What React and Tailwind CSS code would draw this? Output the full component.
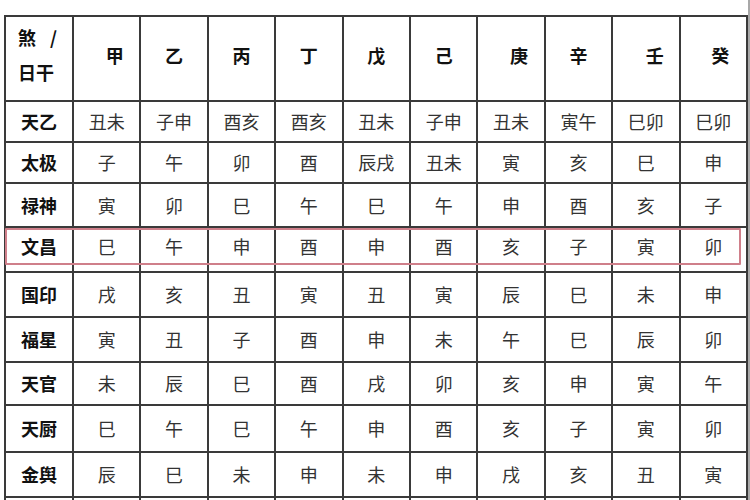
import React from "react";

const stems = ["甲", "乙", "丙", "丁", "戊", "己", "庚", "辛", "壬", "癸"];
const stemOffsets = ["pl-[16px]", "", "", "", "", "", "pl-[16px]", "", "pl-[18px]", "pl-[14px]"];

const rows = [
  { label: "天乙", h: "h-[41px]", pad: "", cells: ["丑未", "子申", "酉亥", "酉亥", "丑未", "子申", "丑未", "寅午", "巳卯", "巳卯"] },
  { label: "太极", h: "h-[41px]", pad: "", cells: ["子", "午", "卯", "酉", "辰戌", "丑未", "寅", "亥", "巳", "申"] },
  { label: "禄神", h: "h-[44px]", pad: "", cells: ["寅", "卯", "巳", "午", "巳", "午", "申", "酉", "亥", "子"] },
  { label: "文昌", h: "h-[45px]", pad: "pb-[7px]", cells: ["巳", "午", "申", "酉", "申", "酉", "亥", "子", "寅", "卯"] },
  { label: "国印", h: "h-[45px]", pad: "", cells: ["戌", "亥", "丑", "寅", "丑", "寅", "辰", "巳", "未", "申"] },
  { label: "福星", h: "h-[45px]", pad: "", cells: ["寅", "丑", "子", "酉", "申", "未", "午", "巳", "辰", "卯"] },
  { label: "天官", h: "h-[43px]", pad: "", cells: ["未", "辰", "巳", "酉", "戌", "卯", "亥", "申", "寅", "午"] },
  { label: "天厨", h: "h-[47px]", pad: "", cells: ["巳", "午", "巳", "午", "申", "酉", "亥", "子", "寅", "卯"] },
  { label: "金舆", h: "h-[45px]", pad: "", cells: ["辰", "巳", "未", "申", "未", "申", "戌", "亥", "丑", "寅"] },
  { label: "", h: "h-[45px]", pad: "", cells: ["", "", "", "", "", "", "", "", "", ""] },
];

const cell = "border-2 border-[#3a3a3a] p-0";

export default function App() {
  return (
    <div
      className="relative w-[750px] h-[500px] overflow-hidden bg-white"
      style={{ fontFamily: '"Noto Sans CJK SC", "Noto Sans", sans-serif' }}
    >
      <div className="flex h-full">
        <div className="flex-1 pt-[15px] pl-[4px]">
          <table className="border-collapse table-fixed w-[744px] text-[18px] text-[#222]">
            <colgroup>
              <col className="w-[68px]" />
              {stems.map((s) => (
                <col key={s} />
              ))}
            </colgroup>
            <tbody>
              <tr>
                <td className={`${cell} h-[85px] align-top pl-[12px] pt-[3px] font-bold text-[#111] leading-[35px]`}>
                  <div>
                    煞<span className="ml-[14px] font-bold">/</span>
                  </div>
                  <div>日干</div>
                </td>
                {stems.map((s, i) => (
                  <td key={s} className={`${cell} h-[85px] text-center font-bold text-[#111] pb-[6px] ${stemOffsets[i]}`}>
                    {s}
                  </td>
                ))}
              </tr>
              {rows.map((r, ri) => (
                <tr key={ri}>
                  <td className={`${cell} ${r.h} ${r.pad} text-center font-bold text-[#111]`}>{r.label}</td>
                  {r.cells.map((c, ci) => (
                    <td key={ci} className={`${cell} ${r.h} ${r.pad} text-center text-[#333]`}>
                      {c}
                    </td>
                  ))}
                </tr>
              ))}
            </tbody>
          </table>
        </div>
        <div className="w-[3px] h-full bg-[#a8a8a8]" />
      </div>
      <div className="absolute left-[5px] top-[228px] w-[736px] h-[37px] border-2 border-[#cf7f8a] rounded-[1px] pointer-events-none" />
    </div>
  );
}
